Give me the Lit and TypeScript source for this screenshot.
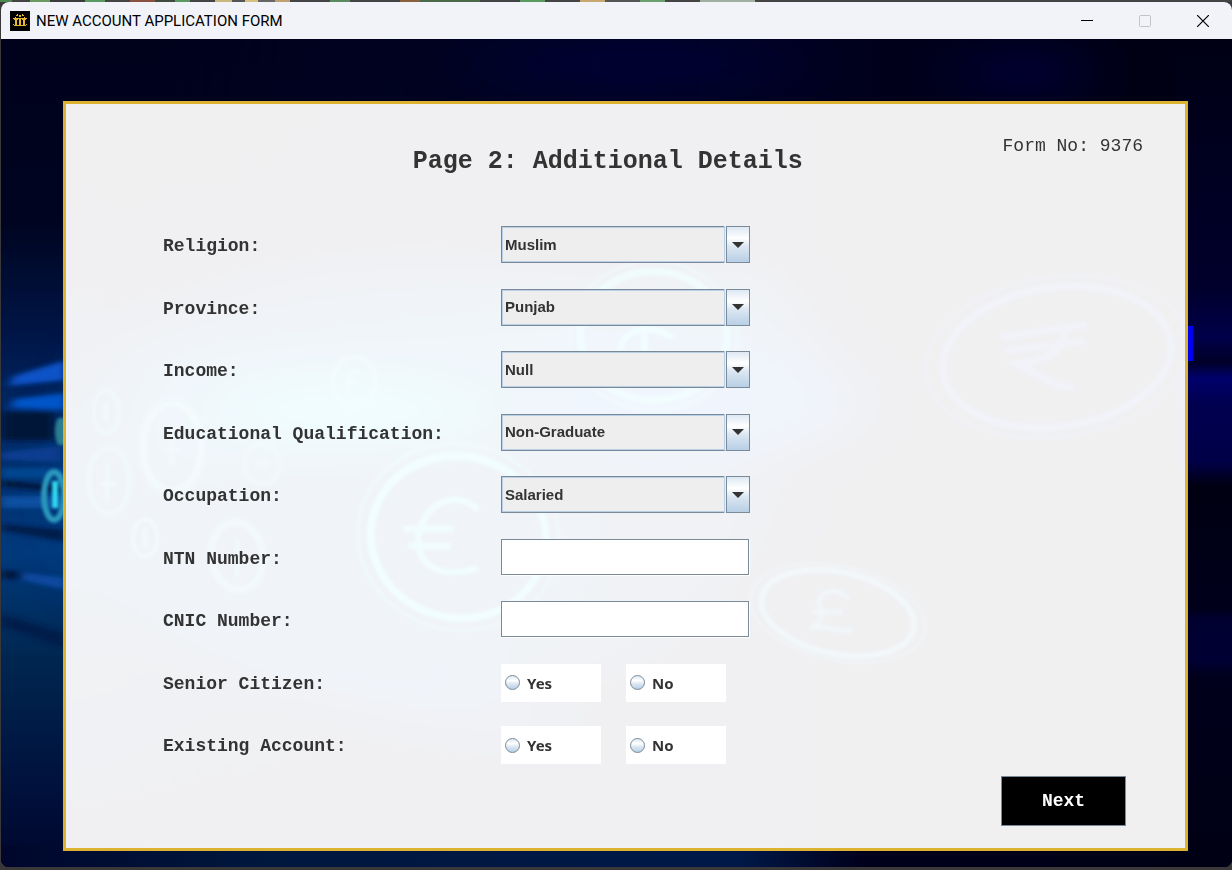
import { LitElement, html, css, svg } from "lit";
import { customElement, property } from "lit/decorators.js";

type Field =
  | { kind: "select"; id: string; label: string; options: string[] }
  | { kind: "text"; id: string; label: string }
  | { kind: "radio"; id: string; label: string; options: string[] };

const FIELDS: Field[] = [
  { kind: "select", id: "religion", label: "Religion:", options: ["Muslim"] },
  { kind: "select", id: "province", label: "Province:", options: ["Punjab"] },
  { kind: "select", id: "income", label: "Income:", options: ["Null"] },
  { kind: "select", id: "education", label: "Educational Qualification:", options: ["Non-Graduate"] },
  { kind: "select", id: "occupation", label: "Occupation:", options: ["Salaried"] },
  { kind: "text", id: "ntn", label: "NTN Number:" },
  { kind: "text", id: "cnic", label: "CNIC Number:" },
  { kind: "radio", id: "senior", label: "Senior Citizen:", options: ["Yes", "No"] },
  { kind: "radio", id: "existing", label: "Existing Account:", options: ["Yes", "No"] },
];

@customElement("money-backdrop")
export class MoneyBackdrop extends LitElement {
  static styles = css`
    :host { display: block; overflow: hidden; background: #00001c; }
    .art { display: block; width: 100%; height: 100%; }
  `;

  /* A coin: two concentric rings around a currency mark. */
  private coin(cx: number, cy: number, rx: number, ry: number, w: number, color: string, tilt = 0, glow = 1) {
    return svg`<g fill="none" stroke=${color} opacity=${glow} transform="rotate(${tilt} ${cx} ${cy})">
      <ellipse cx=${cx} cy=${cy} rx=${rx} ry=${ry} stroke-width=${w} opacity=".5"/>
      <ellipse cx=${cx} cy=${cy} rx=${rx * 0.87} ry=${ry * 0.87} stroke-width=${w * 2}/>
    </g>`;
  }

  render() {
    return html`<svg class="art" viewBox="1 39 1230 828" preserveAspectRatio="none" aria-hidden="true">
      <defs>
        <filter id="soft" x="-30%" y="-60%" width="160%" height="220%"><feGaussianBlur stdDeviation="5 2"/></filter>
        <filter id="haze" x="-50%" y="-50%" width="200%" height="200%"><feGaussianBlur stdDeviation="38 22"/></filter>
        <filter id="edge"><feGaussianBlur stdDeviation="1.5"/></filter>
        <linearGradient id="base" x1="0" x2="1" y1="0" y2="0">
          <stop offset="0" stop-color="#00041f"/><stop offset=".5" stop-color="#000428"/>
          <stop offset=".8" stop-color="#000018"/><stop offset="1" stop-color="#000014"/>
        </linearGradient>
        <linearGradient id="left" x1="0" x2="0" y1="0" y2="1">
          <stop offset="0" stop-color="#00021c"/><stop offset=".22" stop-color="#000420"/>
          <stop offset=".36" stop-color="#001648"/><stop offset=".46" stop-color="#002a66"/>
          <stop offset=".62" stop-color="#003a7c"/><stop offset=".75" stop-color="#00264f"/>
          <stop offset=".88" stop-color="#001440"/><stop offset="1" stop-color="#00062c"/>
        </linearGradient>
        <linearGradient id="fade" x1="0" x2="1" y1="0" y2="0">
          <stop offset="0" stop-color="#fff"/><stop offset=".12" stop-color="#fff"/><stop offset="1" stop-color="#000"/>
        </linearGradient>
        <mask id="fade-out"><rect x="1" y="39" width="700" height="828" fill="url(#fade)"/></mask>
        <linearGradient id="floor" x1="0" x2="1" y1="0" y2="0">
          <stop offset="0" stop-color="#00062c"/><stop offset=".22" stop-color="#00183e"/>
          <stop offset=".6" stop-color="#001848"/><stop offset=".7" stop-color="#00001c"/>
          <stop offset="1" stop-color="#000014"/>
        </linearGradient>
        <linearGradient id="right" x1="0" x2="0" y1="0" y2="1">
          <stop offset="0" stop-color="#000014"/><stop offset=".3" stop-color="#00002c"/>
          <stop offset=".36" stop-color="#00004a"/><stop offset=".39" stop-color="#000028"/>
          <stop offset=".41" stop-color="#00006c"/><stop offset=".44" stop-color="#000050"/>
          <stop offset=".51" stop-color="#000048"/><stop offset=".54" stop-color="#000012"/>
          <stop offset=".69" stop-color="#00001c"/><stop offset=".7" stop-color="#000030"/>
          <stop offset=".75" stop-color="#000034"/><stop offset=".77" stop-color="#00001c"/>
          <stop offset="1" stop-color="#000014"/>
        </linearGradient>
      </defs>
      <rect x="1" y="39" width="1230" height="828" fill="url(#base)"/>
      <rect x="1" y="39" width="700" height="828" fill="url(#left)" mask="url(#fade-out)"/>
      <rect x="1" y="846" width="1230" height="21" fill="url(#floor)"/>
      <rect x="1176" y="39" width="56" height="828" fill="url(#right)"/>
      <g filter="url(#haze)">
        <ellipse cx="640" cy="64" rx="170" ry="14" fill="#00083a"/>
        <ellipse cx="1020" cy="72" rx="60" ry="18" fill="#000046"/>
        <ellipse cx="420" cy="480" rx="340" ry="220" fill="#0050a0" opacity=".55"/>
        <path d="M130 350 L760 270 L840 430 L130 480Z" fill="#0a90e0" opacity=".55"/>
        <ellipse cx="350" cy="410" rx="130" ry="26" fill="#10e8ff"/>
        <ellipse cx="700" cy="400" rx="160" ry="60" fill="#0860ff" opacity=".6"/>
        <path d="M130 610 L420 720 L620 760 L400 640Z" fill="#0870ff" opacity=".4"/>
      </g>
      <g filter="url(#soft)">
        <path d="M14 376 L66 360 V380 L8 386Z" fill="#0852c8"/>
        <path d="M14 399 L66 393 V410 L10 408Z" fill="#0654c8"/>
        <path d="M1 412 H54 V440 H1Z" fill="#001438"/>
        <path d="M1 452 L60 446 V462 L1 460Z" fill="#083e90"/>
        <path d="M1 468 H66 V478 H1Z" fill="#064690"/>
        <path d="M1 480 L66 488 V492 L1 486Z" fill="#001636"/>
        <path d="M1 496 H66 V508 H1Z" fill="#0850a0"/>
        <path d="M1 524 L66 530 V542 L1 530Z" fill="#001a48"/>
        <path d="M1 570 L44 574 V582 L1 578Z" fill="#00143e"/>
        <path d="M22 572 L66 578 V590 L22 580Z" fill="#0848a0"/>
        <path d="M1 614 L66 634 V648 L1 626Z" fill="#001a48"/>
      </g>
      <g filter="url(#edge)">
        <path d="M66 418 H58 C54 424 54 438 58 445 H66" fill="#2b7e90"/>
        <ellipse cx="54" cy="496" rx="10" ry="24" fill="none" stroke="#2a98bc" stroke-width="6"/>
        <path d="M55 481 V508" stroke="#2ed8f0" stroke-width="6"/>
        ${this.coin(106, 412, 14, 24, 2, "#30d8ff", 0, 0.45)}
        ${this.coin(109, 481, 23, 37, 2, "#30e0ff", 0, 0.5)}
        ${this.coin(172, 447, 33, 50, 3, "#70ffff", 0, 0.5)}
        ${this.coin(145, 538, 14, 21, 2, "#50e0ff", 0, 0.5)}
        ${this.coin(237, 556, 29, 38, 3, "#50f0ff", -8, 0.5)}
        ${this.coin(262, 464, 20, 22, 2, "#60f0ff", 0, 0.35)}
        ${this.coin(354, 381, 24, 27, 2, "#70ffff", 0, 0.4)}
        ${this.coin(458, 537, 101, 93, 4, "#20ffff", 12, 0.8)}
        ${this.coin(653, 336, 84, 74, 4, "#20ffff", 0, 0.7)}
        ${this.coin(837, 613, 89, 47, 3, "#40d0ff", 12, 0.6)}
        ${this.coin(1056, 357, 132, 80, 4, "#3060ff", -8, 0.55)}
        <g fill="none" stroke="#20ffff" stroke-width="7" opacity=".75">
          <path d="M478 510 C458 490 425 500 418 535 C415 565 438 580 478 568"/>
          <path d="M403 529 H453 M408 546 H451"/>
          <path d="M644 310 V382 M672 338 C652 322 620 330 620 350"/>
        </g>
        <path d="M172 426 V466 M164 450 H182 M107 464 V500 M100 484 H116 M145 528 V548 M237 540 V576 M228 562 H248 M106 402 V422 M256 464 H270 M348 372 V392 M348 372 H360 M348 381 H358"
          fill="none" stroke="#50f0ff" stroke-width="5" opacity=".45"/>
        <path d="M848 600 C840 588 820 588 818 602 C824 616 822 620 810 628 C826 624 838 634 852 630 M812 612 H842"
          fill="none" stroke="#30c0ff" stroke-width="5" opacity=".55"/>
        <path d="M1000 337 L1086 325 M1004 351 L1084 341 M1062 328 C1068 350 1044 362 1016 364 L1054 384 L1074 388"
          fill="none" stroke="#3060ff" stroke-width="8" opacity=".5"/>
      </g>
      <rect x="1184" y="326" width="8" height="35" fill="#0000f4"/>
    </svg>`;
  }
}

@customElement("title-bar")
export class TitleBar extends LitElement {
  @property() caption = "";

  static styles = css`
    :host {
      display: flex; align-items: center; height: 37px;
      background: #f1f3f9; color: #000;
      font: 15px/20px Roboto, "Open Sans", sans-serif;
    }
    .logo { display: block; margin: 0 6px 0 9px; }
    .caption { flex: 1; margin: 0; font-size: inherit; font-weight: 400; }
    .control {
      display: grid; place-items: center; width: 58px; height: 100%;
      padding: 0; border: 0; background: none;
    }
    .glyph { display: block; }
  `;

  render() {
    return html`
      <svg class="logo" width="20" height="20" viewBox="0 0 20 20" aria-hidden="true">
        <rect width="20" height="20" fill="#000"/>
        <g fill="#e8b92e">
          <path d="M3 7H17V8H3Z M4 14H16V15H4Z M5 8H7V14H5Z M9 8H11V14H9Z M13 8H15V14H13Z M4 8H8V9H4Z M12 8H16V9H12Z"/>
          <path d="M9 4H11V6H9Z M6 4H8V5H6Z M12 4H14V5H12Z M7 3H8V4H7Z M12 3H13V4H12Z M5 6H6V7H5Z M14 6H15V7H14Z M3 13H4V14H3Z M16 13H17V14H16Z"/>
        </g>
      </svg>
      <h1 class="caption">${this.caption}</h1>
      <button class="control" aria-label="Minimize">
        <svg class="glyph" width="12" height="12" viewBox="0 0 12 12"><path d="M0 5.500H12" stroke="#000"/></svg>
      </button>
      <button class="control" aria-label="Maximize" disabled>
        <svg class="glyph" width="12" height="12" viewBox="0 0 12 12"><rect x=".5" y=".5" width="11" height="11" rx="1" fill="none" stroke="#c2c3c8"/></svg>
      </button>
      <button class="control" aria-label="Close">
        <svg class="glyph" width="12" height="12" viewBox="0 0 12 12"><path d="M0 0L12 12M12 0L0 12" stroke="#000" stroke-width="1.200"/></svg>
      </button>`;
  }
}

@customElement("app-root")
export class AppRoot extends LitElement {
  static styles = css`
    :host {
      display: flex; flex-direction: column; box-sizing: border-box;
      min-height: 100vh; padding: 2px 0 3px 1px;
      background:
        linear-gradient(90deg, #4a8a50 0 12px, #444 12px 30px, #6a9a60 30px 50px, #3c3c3c 50px 85px,
          #5a9a60 85px 105px, #444 105px 130px, #8a5040 130px 155px, #3f4a3f 155px 175px, #5a9a60 175px 190px,
          #444 190px 215px, #c8b880 215px 232px, #555 232px 245px, #d8c080 245px 258px, #666 258px 275px,
          #c0a070 275px 290px, #444 290px 330px, #5a8a60 330px 350px, #444 350px 400px, #8a6040 400px 420px,
          #4a6a4a 420px 480px, #444 480px 520px, #5a9a60 520px 545px, #444 545px 580px, #c8a870 580px 605px,
          #555 605px 640px, #6aa070 640px 665px, #444 665px 700px, #a0b0a0 700px 755px, #444 755px) top / 100% 2px no-repeat,
        #3a3838;
    }
    .window {
      flex: 1; display: flex; flex-direction: column;
      border-radius: 8px; overflow: hidden; background: #00001c;
    }
    .stage { flex: 1; display: grid; }
    .backdrop { grid-area: 1 / 1; min-height: 0; contain: size; }
    .card {
      grid-area: 1 / 1; z-index: 1; box-sizing: border-box;
      display: flex; flex-direction: column;
      margin: 62px 44px 16px 62px; padding: 31px 0 22px;
      border: 3px solid #dcb230;
      background: rgba(255, 255, 255, 0.94);
      color: #333;
      font: bold 18px/22px "Liberation Mono", "Courier New", monospace;
    }
    .header { display: flex; align-items: flex-start; padding: 0 42px 0 147px; }
    .title { flex: 1; margin: 0; padding-top: 12px; text-align: center; font-size: 25px; line-height: 30px; font-weight: 700; }
    .form-no { margin: 0; font-weight: 400; }
    .fields {
      display: grid; align-content: space-between; flex: 1;
      margin-top: 49px; padding: 0 97px;
    }
    .row { display: grid; grid-template-columns: 338px 1fr; height: 38px; align-items: start; }
    .label { line-height: 40px; }
    .combo { display: grid; grid-template-columns: 1fr 24px; width: 249px; height: 37px; }
    .select {
      grid-area: 1 / 1 / 2 / 3; box-sizing: border-box; width: 100%; height: 100%;
      margin: 0; padding: 0 26px 0 3px; appearance: none;
      border: 1px solid #7a8a99; border-radius: 0;
      background: #eee; box-shadow: inset 0 0 0 1px #b8cfe5;
      color: #333; font: bold 15px/20px "Liberation Sans", Arial, sans-serif;
    }
    .arrow {
      grid-area: 1 / 2; z-index: 1; pointer-events: none; box-sizing: border-box;
      display: grid; place-items: center;
      border: 1px solid #7a8a99;
      background: linear-gradient(#dde8f3, #fff 32%, #dce7f2 55%, #b8cfe5);
      box-shadow: -1px 0 0 #eee, -2px 0 0 #b8cfe5;
      clip-path: inset(0 0 0 -2px);
    }
    .input {
      box-sizing: border-box; width: 248px; height: 36px; margin: 0; padding: 0 4px;
      border: 1px solid #7a8a99; border-radius: 0; background: #fff;
      box-shadow: 1px 1px 0 #fff;
      color: #333; font: bold 15px/20px "Liberation Sans", Arial, sans-serif;
    }
    .choices { display: flex; gap: 25px; }
    .choice {
      display: flex; align-items: center; gap: 7px; box-sizing: border-box;
      width: 100px; height: 38px; padding-left: 4px; background: #fff;
      font: bold 15px/20px "Noto Sans", "Open Sans", sans-serif;
    }
    .radio {
      appearance: none; box-sizing: border-box; width: 15px; height: 15px; margin: 0;
      border: 1px solid #7a8a99; border-radius: 50%;
      background: linear-gradient(#dde8f3, #fff 35%, #dce7f2 60%, #b8cfe5);
    }
    .radio:checked { background: radial-gradient(#333 0 3px, #dce7f2 4px); }
    .footer { display: flex; justify-content: flex-end; margin-top: 12px; padding-right: 59px; }
    .next {
      width: 125px; height: 50px; padding: 0; border: 1px solid #7a8a99; border-radius: 0;
      background: #000; color: #fff; font: inherit;
    }
  `;

  private control(f: Field) {
    if (f.kind === "select") {
      return html`<div class="combo">
        <select class="select" id=${f.id}>${f.options.map((o) => html`<option>${o}</option>`)}</select>
        <span class="arrow"><svg width="12" height="6" viewBox="0 0 12 6" aria-hidden="true"><path d="M0 0H12L6 6Z" fill="#333"/></svg></span>
      </div>`;
    }
    if (f.kind === "text") return html`<input class="input" id=${f.id} type="text" />`;
    return html`<div class="choices" role="radiogroup" aria-labelledby=${f.id}>
      ${f.options.map((o) => html`<label class="choice"><input class="radio" type="radio" name=${f.id} value=${o} />${o}</label>`)}
    </div>`;
  }

  render() {
    return html`<div class="window">
      <title-bar caption="NEW ACCOUNT APPLICATION FORM"></title-bar>
      <main class="stage">
        <money-backdrop class="backdrop"></money-backdrop>
        <form class="card" @submit=${(e: Event) => e.preventDefault()}>
          <header class="header">
            <h2 class="title">Page 2: Additional Details</h2>
            <p class="form-no">Form No: 9376</p>
          </header>
          <div class="fields">
            ${FIELDS.map((f) => html`<div class="row">
              ${f.kind === "radio"
                ? html`<span class="label" id=${f.id}>${f.label}</span>`
                : html`<label class="label" for=${f.id}>${f.label}</label>`}
              ${this.control(f)}
            </div>`)}
          </div>
          <footer class="footer"><button class="next" type="submit">Next</button></footer>
        </form>
      </main>
    </div>`;
  }
}
